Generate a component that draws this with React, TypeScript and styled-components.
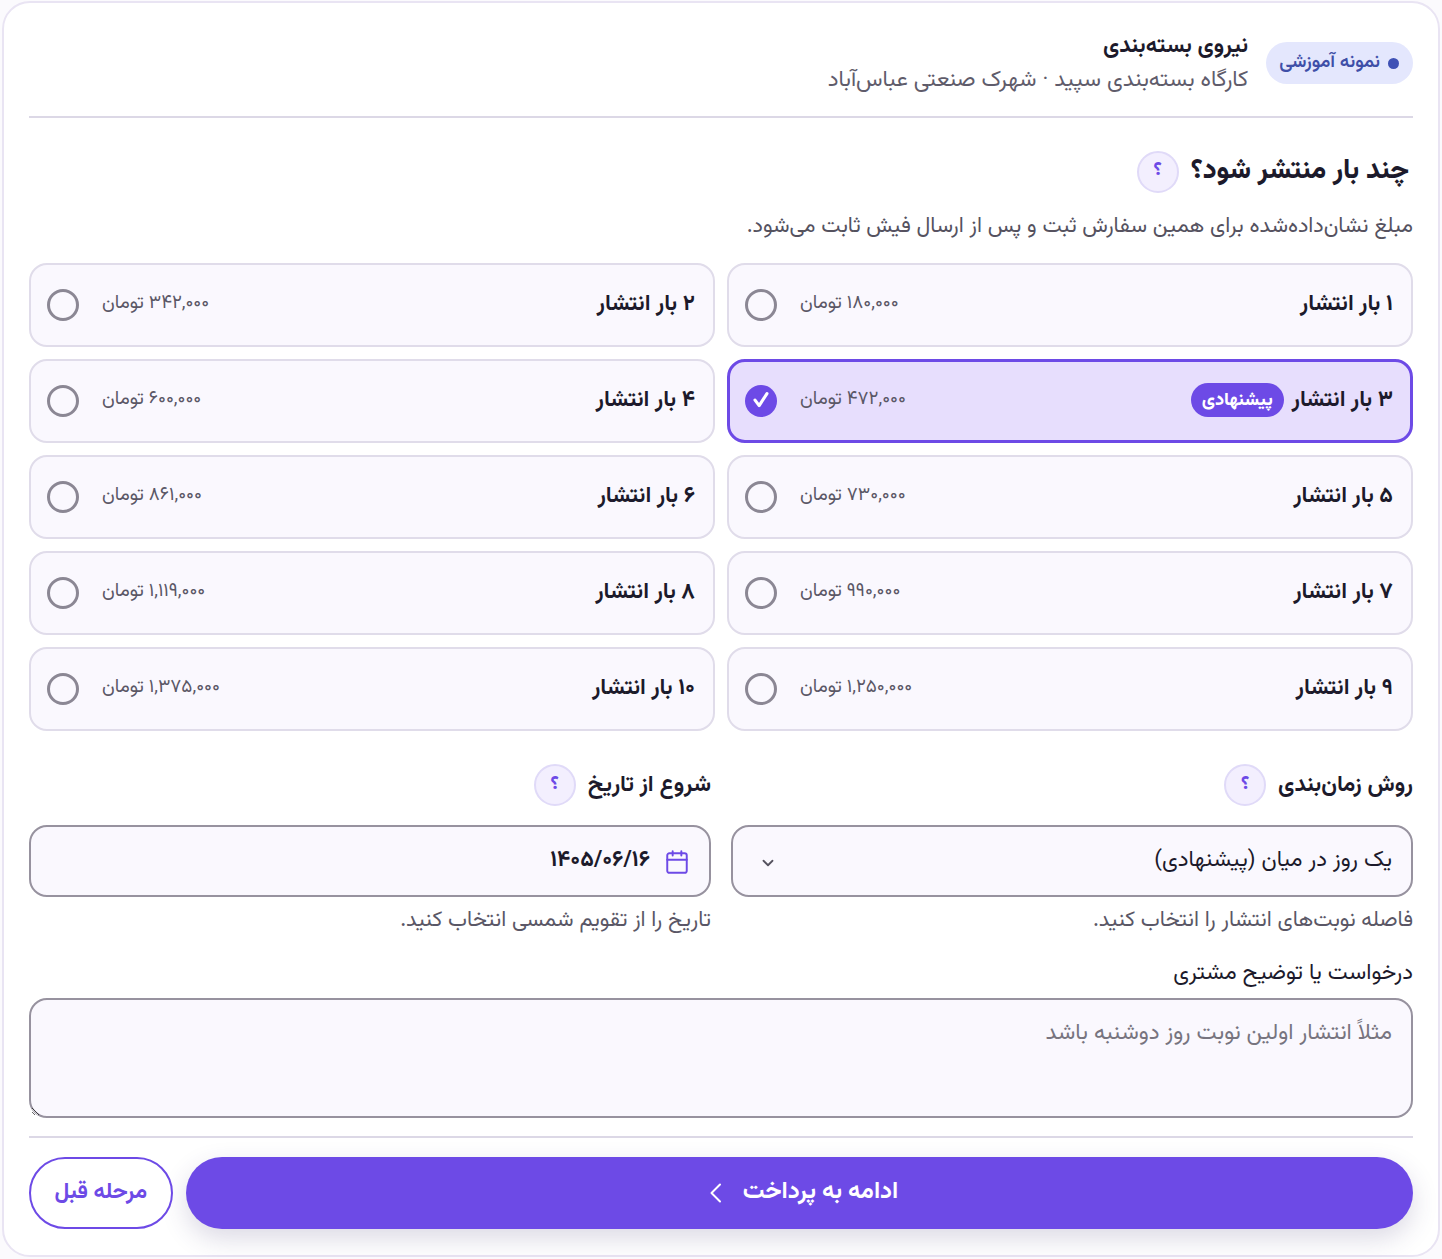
import React from "react";
import styled, { createGlobalStyle } from "styled-components";

const Global = createGlobalStyle`
  html, body { margin: 0; padding: 0; background: #fbfafd; }
  * { box-sizing: border-box; }
  body { font-family: Vazirmatn, Inter, "Noto Sans", sans-serif; }
  textarea { font-family: inherit; }
`;
const Card = styled.div`
  width: 1438px; height: 1256px; margin: 1px 0 0 2px; direction: rtl; background: #fff;
  border: 2px solid #e9e4f3; border-radius: 28px; padding: 0 25px;
  color: #1c1a2b; display: flex; flex-direction: column;
`;
const Header = styled.header`
  height: 115px; padding-top: 29px; border-bottom: 2px solid #dcd8e6; display: flex; gap: 18px; align-items: flex-start;
`;
const Badge = styled.div`
  height: 42px; margin-top: 10px; padding: 0 14px 2px 13px; border-radius: 21px; background: #e4e7fd; color: #3f4fa8;
  display: flex; align-items: center; gap: 8px; font-size: 18.8px; font-weight: 600;
`;
const Dot = styled.span`width: 11px; height: 11px; margin-top: 2px; border-radius: 50%; background: #3f51b5;`;
const HeaderText = styled.div`display: flex; flex-direction: column; gap: 4px;`;
const Name = styled.div`font-size: 22.4px; font-weight: 700; line-height: 30px;`;
const Sub = styled.div`font-size: 22.4px; color: #5f5c6b; line-height: 30px;`;
const TitleRow = styled.div`display: flex; align-items: center; gap: 12px; padding: 32px 0 0 0; margin-right: 4px;`;
const Title = styled.h2`margin: 0; font-size: 27.5px; font-weight: 800;`;
const Help = styled.span`
  width: 42px; height: 42px; padding-bottom: 2px; border-radius: 50%; background: #f3effe; border: 2px solid #e0daf8; color: #6d4ae6;
  display: flex; align-items: center; justify-content: center; font-size: 19px; font-weight: 800;
`;
const Desc = styled.p`margin: 20px 0 22px; font-size: 21.6px; color: #55525f; line-height: 28px;`;
const OptionGrid = styled.div`display: grid; grid-template-columns: 686px 686px; justify-content: space-between; row-gap: 12px;`;
const Option = styled.div<{ $on?: boolean }>`
  height: 84px; border-radius: 18px; display: flex; align-items: center; justify-content: space-between;
  background: ${p => (p.$on ? "#e7defd" : "#faf8fe")};
  border: ${p => (p.$on ? "3px solid #6d4ae6" : "2px solid #e0dcea")};
  padding-left: ${p => (p.$on ? "15px" : "16px")};
  padding-right: ${p => (p.$on ? "17px" : "18px")};
`;
const OptionLabel = styled.div`display: flex; align-items: center; gap: 8px; font-size: 22.4px; font-weight: 700; padding-bottom: 2px;`;
const Tag = styled.span`background: #6d4ae6; color: #fff; border-radius: 17px; height: 34px; padding: 0 11px; font-size: 18.2px; font-weight: 800; display: flex; align-items: center;`;
const OptionEnd = styled.div`display: flex; align-items: center; gap: 23px;`;
const Price = styled.span`font-size: 18.8px; color: #5a5766; padding-bottom: 4px;`;
const Radio = styled.span<{ $on?: boolean }>`
  width: 32px; height: 32px; border-radius: 50%; display: flex; align-items: center; justify-content: center;
  background: ${p => (p.$on ? "#6d4ae6" : "transparent")}; border: ${p => (p.$on ? "none" : "3px solid #8b8794")};
`;
const FieldRow = styled.div`display: grid; grid-template-columns: 682px 682px; justify-content: space-between; margin-top: 33px;`;
const Field = styled.div`display: flex; flex-direction: column;`;
const FieldHead = styled.div`display: flex; align-items: center; gap: 12px; height: 42px;`;
const Label = styled.div`font-size: 22.6px; font-weight: 700;`;
const Control = styled.div`
  height: 72px; margin-top: 19px; border: 2px solid #97929f; border-radius: 18px; background: #faf8fe; padding: 0 19px 0 26px;
  display: flex; align-items: center; justify-content: space-between; font-size: 22.4px;
`;
const ControlText = styled.span`padding-bottom: 2px;`;
const Chevron = styled.svg`margin-top: 3px;`;
const DateValue = styled.div`display: flex; align-items: center; gap: 14px; font-weight: 700;`;
const CalendarIcon = styled.svg`margin-top: 2px;`;
const Hint = styled.div`font-size: 21.6px; color: #5a5766; margin-top: 9px; line-height: 30px;`;
const NoteLabel = styled.div`font-size: 22.4px; margin-top: 23px; line-height: 30px;`;
const Note = styled.textarea`
  display: block; width: 100%; height: 120px; margin-top: 9px; border: 2px solid #97929f; border-radius: 18px; padding: 16px 19px; background: #faf8fe; font-size: 22.5px; color: #1c1a2b; outline: none;
  &::placeholder { color: #77747f; opacity: 1; }
`;
const Footer = styled.div`
  margin-top: 18px; padding-top: 19px; border-top: 2px solid #dcd8e6; display: flex; gap: 13.5px;
`;
const Primary = styled.div`
  flex: 1; height: 72px; border-radius: 36px; background: #6d4ae6; color: #fff; display: flex; align-items: center; justify-content: center;
  gap: 15px; padding: 0 0 2px 3px; font-size: 24px; font-weight: 700; box-shadow: 0 10px 26px rgba(60,50,110,.18);
`;
const ArrowIcon = styled.svg`margin-top: 2px;`;
const Secondary = styled.div`
  width: 143.5px; height: 72px; padding-bottom: 2px; border-radius: 36px; border: 2px solid #6d4ae6; color: #6d4ae6; background: #fff; display: flex; align-items: center; justify-content: center;
  font-size: 22.4px; font-weight: 700;
`;

const options = [
  ["۱ بار انتشار", "۱۸۰,۰۰۰ تومان"], ["۲ بار انتشار", "۳۴۲,۰۰۰ تومان"],
  ["۳ بار انتشار", "۴۷۲,۰۰۰ تومان"], ["۴ بار انتشار", "۶۰۰,۰۰۰ تومان"],
  ["۵ بار انتشار", "۷۳۰,۰۰۰ تومان"], ["۶ بار انتشار", "۸۶۱,۰۰۰ تومان"],
  ["۷ بار انتشار", "۹۹۰,۰۰۰ تومان"], ["۸ بار انتشار", "۱,۱۱۹,۰۰۰ تومان"],
  ["۹ بار انتشار", "۱,۲۵۰,۰۰۰ تومان"], ["۱۰ بار انتشار", "۱,۳۷۵,۰۰۰ تومان"],
];

export default function App() {
  return (
    <Card>
      <Global />
      <Header>
        <Badge><Dot />نمونه آموزشی</Badge>
        <HeaderText>
          <Name>نیروی بسته‌بندی</Name>
          <Sub>کارگاه بسته‌بندی سپید · شهرک صنعتی عباس‌آباد</Sub>
        </HeaderText>
      </Header>
      <TitleRow><Title>چند بار منتشر شود؟</Title><Help>؟</Help></TitleRow>
      <Desc>مبلغ نشان‌داده‌شده برای همین سفارش ثبت و پس از ارسال فیش ثابت می‌شود.</Desc>
      <OptionGrid>
        {options.map(([l, p], i) => (
          <Option key={l} $on={i === 2}>
            <OptionLabel>{l}{i === 2 && <Tag>پیشنهادی</Tag>}</OptionLabel>
            <OptionEnd>
              <Price>{p}</Price>
              <Radio $on={i === 2}>
                {i === 2 && <svg width="22" height="22" viewBox="0 0 24 24" fill="none" stroke="#fff" strokeWidth="3.4" strokeLinecap="round" strokeLinejoin="round"><path d="M5.5 11l4.5 6L18.5 4" /></svg>}
              </Radio>
            </OptionEnd>
          </Option>
        ))}
      </OptionGrid>
      <FieldRow>
        <Field>
          <FieldHead><Label>روش زمان‌بندی</Label><Help>؟</Help></FieldHead>
          <Control>
            <ControlText>یک روز در میان (پیشنهادی)</ControlText>
            <Chevron width="18" height="18" viewBox="0 0 24 24" fill="none" stroke="#55525f" strokeWidth="2.4" strokeLinecap="round" strokeLinejoin="round"><path d="M6 9l6 6 6-6" /></Chevron>
          </Control>
          <Hint>فاصله نوبت‌های انتشار را انتخاب کنید.</Hint>
        </Field>
        <Field>
          <FieldHead><Label>شروع از تاریخ</Label><Help>؟</Help></FieldHead>
          <Control>
            <DateValue>
              <CalendarIcon width="26" height="26" viewBox="0 0 24 24" fill="none" stroke="#6d4ae6" strokeWidth="1.8" strokeLinecap="round" strokeLinejoin="round"><path d="M8 2v4M16 2v4" /><rect x="3" y="4" width="18" height="18" rx="2" /><path d="M3 10h18" /></CalendarIcon>
              <ControlText>۱۴۰۵/۰۶/۱۶</ControlText>
            </DateValue>
          </Control>
          <Hint>تاریخ را از تقویم شمسی انتخاب کنید.</Hint>
        </Field>
      </FieldRow>
      <NoteLabel>درخواست یا توضیح مشتری</NoteLabel>
      <Note placeholder="مثلاً انتشار اولین نوبت روز دوشنبه باشد" />
      <Footer>
        <Primary>ادامه به پرداخت
          <ArrowIcon width="24" height="24" viewBox="0 0 24 24" fill="none" stroke="#fff" strokeWidth="2" strokeLinecap="round" strokeLinejoin="round"><path d="M16 3.5L7.5 12l8.5 8.5" /></ArrowIcon>
        </Primary>
        <Secondary>مرحله قبل</Secondary>
      </Footer>
    </Card>
  );
}
